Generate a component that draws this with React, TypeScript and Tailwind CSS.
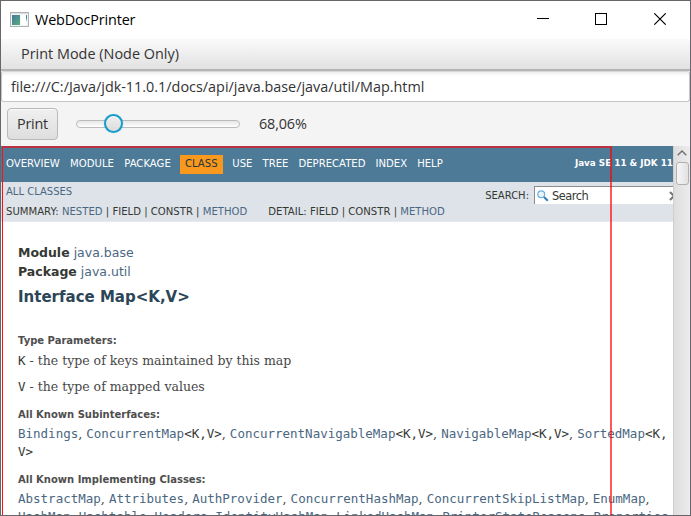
import React from 'react';

const ui = "font-['Open_Sans','Noto_Sans',sans-serif]";
const sans = "font-['DejaVu_Sans',sans-serif]";

function Mono({ children }: { children: React.ReactNode }) {
  return <span className="font-['DejaVu_Sans_Mono',monospace] text-[12.5px] text-[#353833]">{children}</span>;
}

function Link({ children }: { children: React.ReactNode }) {
  return <span className="text-[#4a6782]">{children}</span>;
}

function TypeList({ items }: { items: [string, boolean][] }) {
  return (
    <>
      {items.map(([name, generic], i) => (
        <React.Fragment key={name}>
          <Mono>
            <Link>{name}</Link>
            {generic && <>&lt;K,<wbr />V&gt;</>}
          </Mono>
          {i < items.length - 1 ? ', ' : ''}
        </React.Fragment>
      ))}
    </>
  );
}

function TitleBar() {
  return (
    <header className="flex h-[38px] shrink-0 items-center bg-white pb-[2px] pl-[9px]">
      <svg width="19" height="15" viewBox="0 0 19 15" shapeRendering="crispEdges">
        <defs>
          <linearGradient id="pane" x1="0" y1="0" x2="1" y2="1">
            <stop offset="0" stopColor="#4779a0" />
            <stop offset="1" stopColor="#55ac79" />
          </linearGradient>
        </defs>
        <rect x="0.5" y="0.5" width="18" height="14" fill="#f4f4f4" stroke="#adb2b5" />
        <rect x="1" y="1" width="17" height="1" fill="#dce0e2" />
        <rect x="2" y="3" width="8" height="10" fill="url(#pane)" />
        <rect x="11" y="3" width="5" height="10" fill="#fff" />
        <rect x="16" y="3" width="1" height="4" fill="#4b8b98" />
        <rect x="16" y="7" width="1" height="2" fill="#8fc3ac" />
      </svg>
      <h1 className={`${ui} ml-[6px] pt-[2px] text-[14.4px] tracking-[-0.15px] text-black`}>WebDocPrinter</h1>
      <svg className="ml-auto mr-[23px]" width="130" height="12" viewBox="0 0 130 12" fill="none" stroke="#000">
        <path d="M0 5.5H12M58.5 .5h11v11h-11z" shapeRendering="crispEdges" />
        <path d="M117.3 .3l11.4 11.4M128.7 .3l-11.4 11.4" strokeWidth="1.1" />
      </svg>
    </header>
  );
}

function Controls() {
  return (
    <div className={`${ui} flex h-[44px] shrink-0 items-center bg-[#f4f4f4] pl-[6px] text-[14.4px] text-[#333]`}>
      <button className="h-[32px] w-[51px] rounded-[4px] border border-[#b9b9b9] bg-linear-to-b from-[#f0f0f0] to-[#dedede] tracking-[-0.2px] shadow-[inset_0_1px_0_#fafafa]">
        Print
      </button>
      <div className="relative ml-[18px] h-[8px] w-[164px] rounded-full border border-[#bcbcbc] bg-linear-to-b from-[#e6e6e6] to-white">
        <span className="absolute -top-[7px] left-[27px] size-[19px] rounded-full border-2 border-[#159bcb] bg-linear-to-b from-[#eee] to-[#ddd] shadow-[0_0_1px_#59b9dc,inset_0_1px_0_#fafafa]" />
      </div>
      <span className="ml-[19px] tracking-[-0.15px]">68,06%</span>
    </div>
  );
}

function TopNav() {
  return (
    <nav className={`${sans} flex h-[36px] items-center bg-[#4d7a97] pl-[5px] text-[10.1px] text-white`}>
      <ul className="flex items-center">
        <li>OVERVIEW</li>
        <li className="ml-[10.3px]">MODULE</li>
        <li className="ml-[10.3px]">PACKAGE</li>
        <li className="ml-[9px] flex h-[19px] w-[43px] items-center justify-center bg-[#f8981d] text-[#253441]">CLASS</li>
        <li className="ml-[9.5px]">USE</li>
        <li className="ml-[10px]">TREE</li>
        <li className="ml-[10px]">DEPRECATED</li>
        <li className="ml-[10px]">INDEX</li>
        <li className="ml-[10px]">HELP</li>
      </ul>
      <span className="ml-auto pb-[1px] text-[8.8px] font-bold">Java SE 11 &amp; JDK 11</span>
    </nav>
  );
}

function SubNav() {
  return (
    <div className={`${sans} flex h-[40px] justify-between border-b border-[#e7eaee] bg-[#dee3e9] pl-[5px] text-[10.1px] text-[#353833]`}>
      <div>
        <div className="h-[20px] text-[10px] leading-[19px]"><Link>ALL CLASSES</Link></div>
        <div className="flex h-[20px] gap-[21px] leading-[20px]">
          <span>SUMMARY: <Link>NESTED</Link> | FIELD | CONSTR | <Link>METHOD</Link></span>
          <span>DETAIL: FIELD | CONSTR | <Link>METHOD</Link></span>
        </div>
      </div>
      <div className="flex items-start pt-[4px]">
        <span className="mr-[5px] text-[10px] leading-[20px]">SEARCH:</span>
        <div className="flex h-[18px] w-[139px] items-center overflow-hidden border-l border-t border-[#8c8c8c] bg-white pl-[2px]">
          <svg width="12" height="12" viewBox="0 0 12 12" fill="none">
            <circle cx="4.2" cy="4.2" r="3.4" fill="#eaf6fc" stroke="#6cb2dc" strokeWidth="1.2" />
            <path d="M7 7l3.8 3.8" stroke="#347fae" strokeWidth="2" />
          </svg>
          <span className="ml-[3px] pt-[1px] text-[11.4px] leading-[14px] tracking-[-0.5px]">Search</span>
          <svg className="-mr-[6px] ml-auto" width="10" height="10" viewBox="0 0 10 10">
            <path d="M1 1l8 8M9 1l-8 8" stroke="#777" strokeWidth="2.2" />
          </svg>
        </div>
      </div>
    </div>
  );
}

function Label({ children }: { children: React.ReactNode }) {
  return <dt className={`${sans} h-[18px] text-[10px] font-bold leading-[18px] text-[#4e4e4e]`}>{children}</dt>;
}

function Doc() {
  return (
    <main className="pl-[17px] pt-[21px] font-['DejaVu_Serif',serif] text-[12.5px] text-[#474747]">
      <div className={`${sans} text-[12.5px] leading-[19px] text-[#353833]`}>
        <div><b>Module</b> <Link>java.base</Link></div>
        <div><b>Package</b> <Link>java.util</Link></div>
      </div>
      <h2 className={`${sans} mt-[5px] text-[15px] font-bold leading-[22px] text-[#2c4557]`}>Interface Map&lt;K,V&gt;</h2>
      <dl className="mt-[24px] w-[655px]">
        <Label>Type Parameters:</Label>
        <dd className="h-[26px] leading-[22px]"><Mono>K</Mono> - the type of keys maintained by this map</dd>
        <dd className="h-[30px] leading-[22px]"><Mono>V</Mono> - the type of mapped values</dd>
        <Label>All Known Subinterfaces:</Label>
        <dd className="mt-px h-[46px] text-[12.7px] leading-[17.5px]">
          <TypeList items={[['Bindings', false], ['ConcurrentMap', true], ['ConcurrentNavigableMap', true], ['NavigableMap', true], ['SortedMap', true]]} />
        </dd>
        <Label>All Known Implementing Classes:</Label>
        <dd className="mt-px whitespace-nowrap text-[12.7px] leading-[17.5px]">
          <div><TypeList items={[['AbstractMap', false], ['Attributes', false], ['AuthProvider', false], ['ConcurrentHashMap', false], ['ConcurrentSkipListMap', false], ['EnumMap', false]]} />,</div>
          <div><TypeList items={[['HashMap', false], ['Hashtable', false], ['Headers', false], ['IdentityHashMap', false], ['LinkedHashMap', false], ['PrinterStateReasons', false], ['Properties', false]]} />,</div>
        </dd>
      </dl>
    </main>
  );
}

export default function App() {
  return (
    <div className="flex h-[516px] w-[691px] flex-col overflow-hidden border border-[#68666b] bg-[#f4f4f4]">
      <TitleBar />
      <div className={`${ui} flex h-[32px] shrink-0 items-center border-b-2 border-[#b5b5b5] bg-linear-to-b from-[#fafafa] to-[#e2e2e2] pl-[20px] text-[14.4px] tracking-[0.02px] text-[#333]`}>
        Print Mode (Node Only)
      </div>
      <div className={`${ui} flex h-[31px] shrink-0 items-center rounded-[3px] border border-[#c6c6c6] border-t-[#d8d8d8] bg-white pl-[9px] text-[14.4px] text-[#333] shadow-[inset_0_3px_3px_-1px_#eee]`}>
        file:///C:/Java/jdk-11.0.1/docs/api/java.base/java/util/Map.html
      </div>
      <Controls />
      <div className="relative flex min-h-0 flex-1 overflow-hidden">
        <div className="h-full w-[672px] shrink-0 overflow-hidden bg-white">
          <TopNav />
          <SubNav />
          <Doc />
        </div>
        <div className="flex w-[17px] shrink-0 flex-col items-center border-l border-[#cfcfcf] bg-linear-to-r from-[#dedede] to-[#ececec]">
          <svg className="mt-[4px]" width="10" height="6" viewBox="0 0 10 6" fill="none">
            <path d="M.7 5.3L5 1l4.3 4.3" stroke="#707070" strokeWidth="1.4" />
          </svg>
          <div className="mt-[6px] h-[23px] w-[13px] shrink-0 rounded-[3px] border border-[#b0b0b0] bg-linear-to-r from-[#f6f6f6] to-[#e2e2e2]" />
        </div>
        <div className="pointer-events-none absolute -bottom-1 left-px top-0 w-[610px] border-l border-r-2 border-t-2 border-l-[#fa1212] border-r-[#ff0000a6] border-t-[#d8202ccc]" />
      </div>
    </div>
  );
}
